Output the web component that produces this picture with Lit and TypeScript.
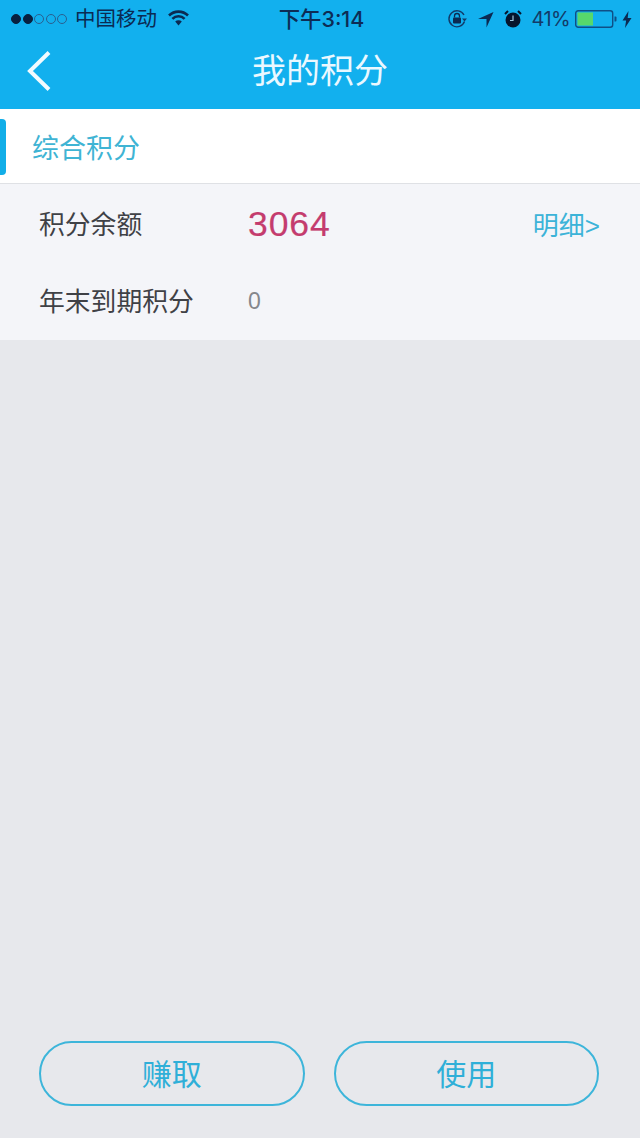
import { LitElement, html, css } from "lit";
import { customElement } from "lit/decorators.js";

@customElement("app-root")
export class AppRoot extends LitElement {
  static styles = css`
    :host {
      display: flex;
      flex-direction: column;
      width: 640px;
      height: 1138px;
      background: #e7e8ec;
      font-family: "Liberation Sans", "Noto Sans CJK SC", sans-serif;
      overflow: hidden;
    }
    .top { background: #12b0ee; height: 109px; flex: none; display: flex; flex-direction: column; }
    .status {
      height: 36px; display: grid; grid-template-columns: 1fr auto 1fr; align-items: center;
      color: #0b2a52; font-size: 20.5px; padding: 0 8px 0 11px;
    }
    .left, .right { display: flex; align-items: center; }
    .right { justify-content: flex-end; }
    .dots { display: flex; gap: 1.5px; margin-right: 8px; }
    .dot { width: 10px; height: 10px; border-radius: 50%; box-sizing: border-box; border: 1px solid #2a5f90; }
    .dot.on { background: #08203f; border-color: #08203f; }
    .carrier { line-height: 34px; height: 36px; margin-top: 2px; }
    .wifi { margin-left: 11px; margin-top: -3px; }
    .time { font-family: "Inter", "Noto Sans CJK SC", sans-serif; font-weight: 500; font-size: 21.4px; color: #0d2c55; margin-top: -3px; }
    .pct { margin: 0 5px 0 9px; font-family: "Inter", sans-serif; font-size: 20px; letter-spacing: -0.6px; color: #123a68; }
    .icon-gap { margin-left: 10px; }
    .nav { flex: 1; display: flex; align-items: center; padding-bottom: 4px; position: relative; justify-content: center; }
    .back { position: absolute; left: 26px; top: 14px; }
    .title { color: #eaf8ff; font-size: 34px; line-height: 40px; }
    .tab {
      background: #fff; height: 74px; flex: none; display: flex; align-items: center; gap: 26px;
      border-bottom: 1px solid #dfe1e5;
    }
    .marker { width: 6px; height: 56px; margin-top: 2px; background: #12aee8; border-radius: 0 4px 4px 0; flex: none; }
    .tab span { color: #3fb4d4; font-size: 27px; }
    .info { background: #f4f5f9; height: 156px; flex: none; box-sizing: border-box; padding: 1px 40px 0 39px; display: flex; flex-direction: column; }
    .row { height: 77px; display: grid; grid-template-columns: 209px 1fr auto; align-items: center; flex: none; }
    .label { color: #3f4146; font-size: 25.8px; line-height: 30px; margin-top: 2px; }
    .big { color: #c43c6e; font-size: 35.5px; letter-spacing: 0.9px; -webkit-text-stroke: 0.2px #c43c6e; margin-top: 2px; }
    .zero { color: #85878c; font-size: 23px; margin-top: 2px; }
    .more { color: #3cb3d8; font-size: 26px; line-height: 30px; margin-top: 4px; }
    .spacer { flex: 1; }
    .actions { display: flex; gap: 29px; padding: 0 41px 32px 39px; flex: none; }
    .btn {
      flex: 1; height: 65px; box-sizing: border-box; border: 2px solid #3db5da; border-radius: 33px;
      display: flex; align-items: center; justify-content: center; padding-bottom: 4px;
      color: #2fafd8; font-size: 30px; background: transparent;
    }
  `;

  render() {
    return html`
      <div class="top">
        <div class="status">
          <div class="left">
            <div class="dots">
              <i class="dot on"></i><i class="dot on"></i><i class="dot"></i><i class="dot"></i><i class="dot"></i>
            </div>
            <span class="carrier">中国移动</span>
            <svg class="wifi" width="21" height="16" viewBox="0 0 21 16">
              <path d="M1 5.5a13.5 13.5 0 0 1 19 0" fill="none" stroke="#0b2a52" stroke-width="2.6"/>
              <path d="M4.4 8.8a8.6 8.6 0 0 1 12.2 0" fill="none" stroke="#0b2a52" stroke-width="2.6"/>
              <path d="M7.2 11.6a4.6 4.6 0 0 1 6.6 0L10.5 15.5z" fill="#0b2a52"/>
            </svg>
          </div>
          <div class="time">下午3:14</div>
          <div class="right">
            <svg width="20" height="20" viewBox="0 0 20 20">
              <path d="M17.5 12.5A8 8 0 1 1 17 6" fill="none" stroke="#123a68" stroke-width="1.4"/>
              <path d="M15 9.5h5l-2.5 3z" fill="#123a68"/>
              <rect x="6" y="8.5" width="8" height="6" rx="1" fill="#0b2a52"/>
              <path d="M7.5 8.5V7a2.5 2.5 0 0 1 5 0v1.5" fill="none" stroke="#0b2a52" stroke-width="1.3"/>
            </svg>
            <svg class="icon-gap" width="17" height="17" viewBox="0 0 17 17">
              <path d="M16.5 1 9.5 16.5V8H1z" fill="#0b2a52"/>
            </svg>
            <svg class="icon-gap" width="18" height="18" viewBox="0 0 18 18">
              <circle cx="9" cy="10" r="7.5" fill="#06152c"/>
              <path d="M9 5.5V10.5H6" fill="none" stroke="#9fc6dc" stroke-width="1.2"/>
              <path d="M1 4 4 1M17 4l-3-3" stroke="#06152c" stroke-width="2"/>
            </svg>
            <span class="pct">41%</span>
            <svg width="42" height="18" viewBox="0 0 42 18">
              <rect x=".7" y=".7" width="37" height="16.6" rx="2.5" fill="none" stroke="#0f4f86" stroke-width="1.4"/>
              <rect x="2.5" y="2.5" width="15.5" height="13" fill="#57d86b"/>
              <path d="M39.5 6.5h1a1 1 0 0 1 1 1v3a1 1 0 0 1-1 1h-1z" fill="#0f4f86"/>
            </svg>
            <svg style="margin-left:5px" width="10" height="17" viewBox="0 0 10 17">
              <path d="M6.5 0 .5 9.5h3.6L3 17l6.5-10H5.7z" fill="#0b2a52"/>
            </svg>
          </div>
        </div>
        <div class="nav">
          <svg class="back" width="26" height="42" viewBox="0 0 26 42">
            <path d="M23 2.5 4 21l19 18.5" fill="none" stroke="#f2fbff" stroke-width="4"/>
          </svg>
          <div class="title">我的积分</div>
        </div>
      </div>
      <div class="tab"><i class="marker"></i><span>综合积分</span></div>
      <div class="info">
        <div class="row">
          <span class="label">积分余额</span><span class="big">3064</span><span class="more">明细&gt;</span>
        </div>
        <div class="row">
          <span class="label">年末到期积分</span><span class="zero">0</span>
        </div>
      </div>
      <div class="spacer"></div>
      <div class="actions">
        <div class="btn">赚取</div>
        <div class="btn">使用</div>
      </div>
    `;
  }
}
